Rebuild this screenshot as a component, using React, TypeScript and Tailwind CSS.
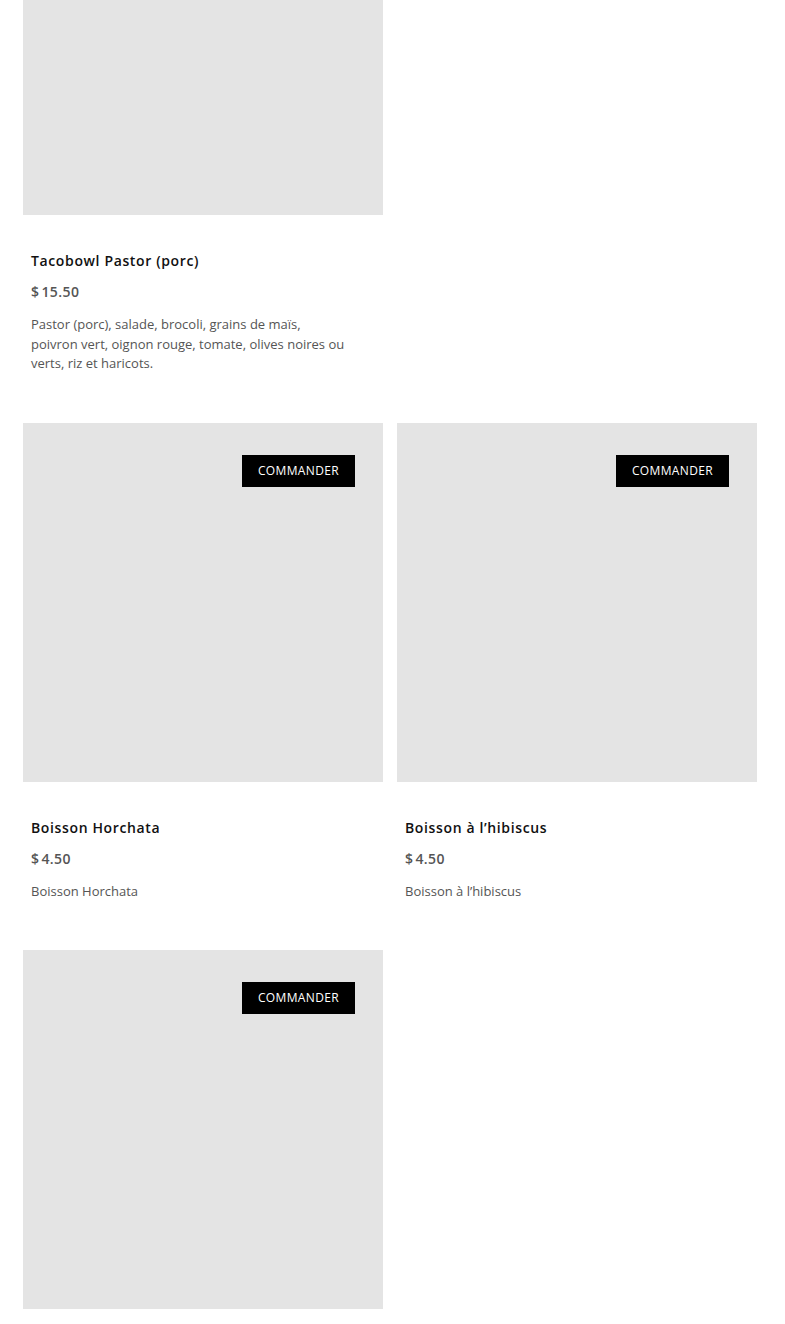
type Item = {
  name: string;
  price: string;
  description: string;
  showOrder: boolean;
};

const rows: (Item | null)[][] = [
  [
    {
      name: 'Tacobowl Pastor (porc)',
      price: '15.50',
      description:
        'Pastor (porc), salade, brocoli, grains de maïs, poivron vert, oignon rouge, tomate, olives noires ou verts, riz et haricots.',
      showOrder: false,
    },
    null,
  ],
  [
    { name: 'Boisson Horchata', price: '4.50', description: 'Boisson Horchata', showOrder: true },
    { name: 'Boisson à l’hibiscus', price: '4.50', description: 'Boisson à l’hibiscus', showOrder: true },
  ],
  [{ name: '', price: '', description: '', showOrder: true }, null],
];

function MenuCard({ item }: { item: Item }) {
  return (
    <div className={item.name ? 'w-[360px] mb-[49px]' : 'w-[360px] mb-[50px]'}>
      <div className="relative h-[359px] bg-[#e4e4e4]">
        {item.showOrder && (
          <button className="absolute top-[32px] right-[28px] h-[32px] px-[16px] bg-black text-white text-[12px] tracking-[0.03em] uppercase">
            Commander
          </button>
        )}
      </div>
      {item.name && (
        <div className="px-2 pt-[36px]">
          <h3 className="text-[14px] leading-[20px] font-semibold tracking-[0.045em] text-[#111]">
            {item.name}
          </h3>
          <p className="mt-[11px] text-[14px] leading-[20px] font-semibold text-[#555] tracking-[0.03em]">
            <span className="mr-[2px]">$</span>
            {item.price}
          </p>
          <p className="mt-[13px] max-w-[316px] text-[13px] leading-[19.5px] text-[#555]">
            {item.description}
          </p>
        </div>
      )}
    </div>
  );
}

export default function App() {
  return (
    <div
      className="min-h-screen bg-white overflow-hidden"
      style={{ fontFamily: '"Open Sans", "Liberation Sans", sans-serif' }}
    >
      <div className="-mt-[144px] pl-[23px]">
        {rows.map((row, i) => (
          <div key={i} className="flex gap-[14px] items-start">
            {row.map((item, j) =>
              item ? <MenuCard key={j} item={item} /> : <div key={j} className="w-[360px]" />
            )}
          </div>
        ))}
      </div>
    </div>
  );
}
